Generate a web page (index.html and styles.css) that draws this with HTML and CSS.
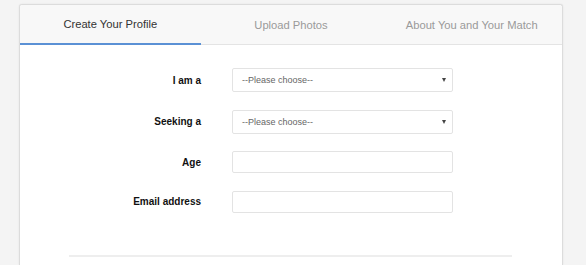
FILE: index.html
```html
<!DOCTYPE html>
<html>
<head>
<meta charset="utf-8">
<link rel="stylesheet" href="styles.css">
</head>
<body>
<div class="card">
  <div class="tabs">
    <div class="tab active">Create Your Profile</div>
    <div class="tab">Upload Photos</div>
    <div class="tab">About You and Your Match</div>
  </div>
  <div class="form">
    <div class="row row-select">
      <div class="label">I am a</div>
      <div class="field select"><span>--Please choose--</span><span class="caret"></span></div>
    </div>
    <div class="row row-select">
      <div class="label">Seeking a</div>
      <div class="field select"><span>--Please choose--</span><span class="caret"></span></div>
    </div>
    <div class="row row-input">
      <div class="label">Age</div>
      <div class="field input"></div>
    </div>
    <div class="row row-input">
      <div class="label">Email address</div>
      <div class="field input"></div>
    </div>
  </div>
  <div class="divider"></div>
</div>
</body>
</html>
```
FILE: styles.css
```css
html, body {
  margin: 0;
  padding: 0;
  background: #f4f4f4;
  height: 100%;
  overflow: hidden;
}
body {
  box-sizing: border-box;
  padding: 4px 0 0 19px;
  font-family: "Liberation Sans", Arial, sans-serif;
}
.card {
  box-sizing: border-box;
  width: 544px;
  height: 261px;
  background: #fff;
  border: 1px solid #dcdcdc;
  border-bottom: none;
  border-radius: 3px 3px 0 0;
  box-shadow: 0 0 2px rgba(0,0,0,0.08);
}
.tabs {
  display: flex;
  height: 39px;
  background: #f8f8f8;
  border-bottom: 1px solid #e4e4e4;
  border-radius: 3px 3px 0 0;
}
.tab {
  flex: 1;
  display: flex;
  align-items: center;
  justify-content: center;
  font-size: 11.2px;
  color: #9a9a9a;
  box-sizing: border-box;
  padding-top: 1px;
}
.tab.active {
  color: #333;
  border-bottom: 2px solid #5b91d5;
  margin-bottom: -1px;
  padding-top: 0;
}
.form {
  display: flex;
  flex-direction: column;
  gap: 17.5px;
  padding-top: 23px;
}
.row {
  display: flex;
  align-items: center;
}
.row-select { height: 24px; }
.row-input { height: 22px; }
.label {
  width: 181px;
  text-align: right;
  font-size: 10px;
  font-weight: bold;
  color: #111;
}
.field {
  margin-left: 31px;
  width: 221px;
  box-sizing: border-box;
  height: 100%;
  border: 1px solid #e3e3e3;
  border-radius: 2px;
  background: #fff;
}
.select {
  display: flex;
  align-items: center;
  justify-content: space-between;
  padding: 0 6px 0 9px;
  font-size: 9px;
  color: #666;
}
.caret {
  width: 0;
  height: 0;
  border-left: 2.5px solid transparent;
  border-right: 2.5px solid transparent;
  border-top: 4px solid #444;
}
.divider {
  margin: 42px 50px 0 49px;
  height: 2px;
  background: #eeeeee;
}
```
